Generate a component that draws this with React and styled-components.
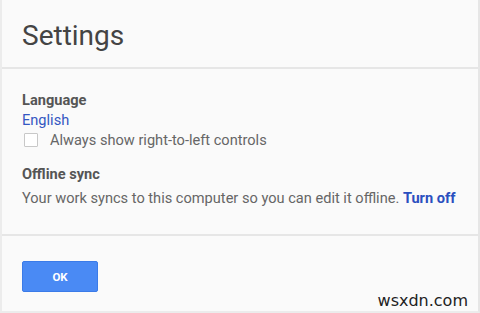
import React, { useState } from 'react';
import styled, { createGlobalStyle } from 'styled-components';

const GlobalStyle = createGlobalStyle`
  html, body {
    margin: 0;
    padding: 0;
    background: #fafafa;
  }
  body {
    font-family: Roboto, "Liberation Sans", Arial, sans-serif;
  }
`;

const Dialog = styled.div`
  position: relative;
  box-sizing: border-box;
  width: 480px;
  height: 313px;
  background: #fafafa;
  border-left: 2px solid #ececec;
  border-right: 2px solid #e6e6e6;
  border-bottom: 2px solid #ececec;
  display: flex;
  flex-direction: column;
`;

const Header = styled.div`
  height: 69px;
  box-sizing: border-box;
  padding: 19px 20px 0;
  border-bottom: 2px solid #e6e6e6;
`;

const Title = styled.h1`
  margin: 0;
  font-size: 28px;
  line-height: 34px;
  font-weight: 400;
  color: #444;
`;

const Body = styled.div`
  height: 167px;
  box-sizing: border-box;
  padding: 21px 20px 0;
  border-bottom: 2px solid #e6e6e6;
`;

const Section = styled.div`
  margin-bottom: ${(p) => p.gap || 0}px;
`;

const Label = styled.div`
  font-size: 14.6px;
  line-height: 20px;
  font-weight: 700;
  color: #555;
`;

const Text = styled.div`
  font-size: 14.6px;
  line-height: 20px;
  margin-top: ${(p) => p.offset || 0}px;
  color: ${(p) => (p.link ? '#3457c2' : '#666')};
`;

const Link = styled.a`
  color: #2a4fbf;
  font-weight: 700;
  text-decoration: none;
  cursor: pointer;
`;

const CheckRow = styled.label`
  display: flex;
  align-items: center;
  gap: 12px;
  font-size: 14.6px;
  line-height: 20px;
  color: #666;
  cursor: pointer;
`;

const Box = styled.span`
  width: 12px;
  height: 12px;
  margin-left: 2px;
  border: 1px solid #c8c8c8;
  border-radius: 1px;
  background: #fff;
`;

const Footer = styled.div`
  flex: 1;
  padding: 25px 20px 0;
`;

const Button = styled.button`
  width: 76px;
  height: 31px;
  border: 1px solid #3b7be8;
  border-radius: 2px;
  background: #4a8af4;
  color: #fff;
  font-family: inherit;
  font-size: 11.5px;
  font-weight: 700;
  cursor: pointer;
`;

const Watermark = styled.span`
  position: absolute;
  right: 10px;
  bottom: 1px;
  font-family: "DejaVu Sans", Verdana, sans-serif;
  font-size: 16px;
  color: #222;
`;

export default function App() {
  const [rtl, setRtl] = useState(false);

  return (
    <>
      <GlobalStyle />
      <Dialog>
        <Header>
          <Title>Settings</Title>
        </Header>
        <Body>
          <Section gap={14}>
            <Label>Language</Label>
            <Text link>English</Text>
            <CheckRow onClick={() => setRtl(!rtl)}>
              <Box />
              Always show right-to-left controls
            </CheckRow>
          </Section>
          <Section>
            <Label>Offline sync</Label>
            <Text offset={4}>
              Your work syncs to this computer so you can edit it offline. <Link>Turn off</Link>
            </Text>
          </Section>
        </Body>
        <Footer>
          <Button>OK</Button>
        </Footer>
        <Watermark>wsxdn.com</Watermark>
      </Dialog>
    </>
  );
}
